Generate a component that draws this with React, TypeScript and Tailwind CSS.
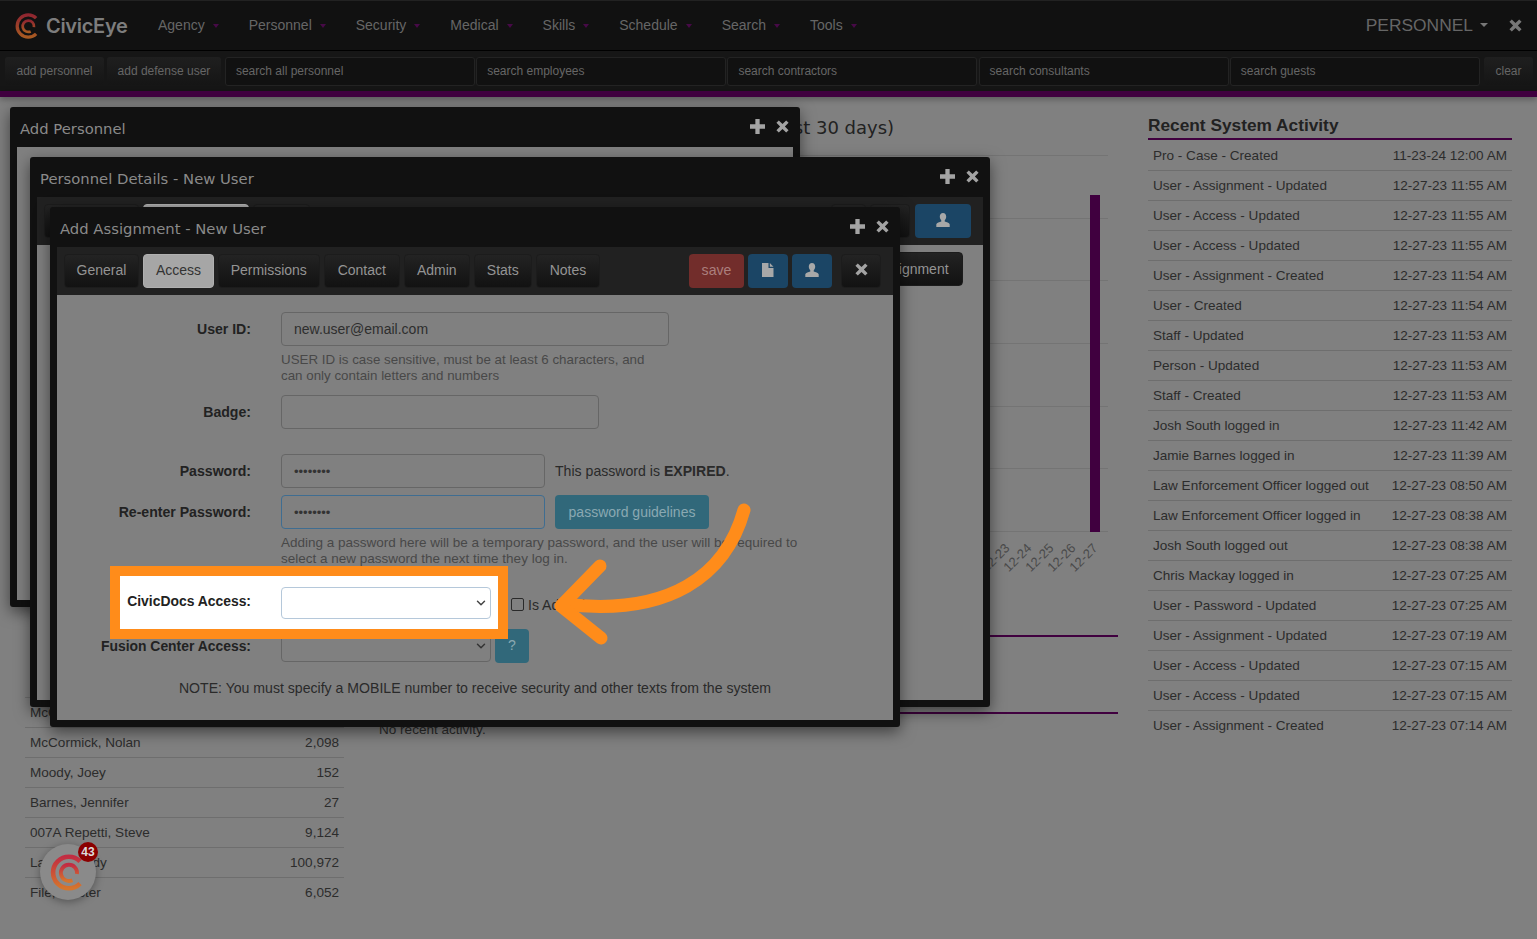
import React from "react";
import { ChevronDown } from "lucide-react";

const activity: [string, string][] = [
  ["Pro - Case - Created", "11-23-24 12:00 AM"],
  ["User - Assignment - Updated", "12-27-23 11:55 AM"],
  ["User - Access - Updated", "12-27-23 11:55 AM"],
  ["User - Access - Updated", "12-27-23 11:55 AM"],
  ["User - Assignment - Created", "12-27-23 11:54 AM"],
  ["User - Created", "12-27-23 11:54 AM"],
  ["Staff - Updated", "12-27-23 11:53 AM"],
  ["Person - Updated", "12-27-23 11:53 AM"],
  ["Staff - Created", "12-27-23 11:53 AM"],
  ["Josh South logged in", "12-27-23 11:42 AM"],
  ["Jamie Barnes logged in", "12-27-23 11:39 AM"],
  ["Law Enforcement Officer logged out", "12-27-23 08:50 AM"],
  ["Law Enforcement Officer logged in", "12-27-23 08:38 AM"],
  ["Josh South logged out", "12-27-23 08:38 AM"],
  ["Chris Mackay logged in", "12-27-23 07:25 AM"],
  ["User - Password - Updated", "12-27-23 07:25 AM"],
  ["User - Assignment - Updated", "12-27-23 07:19 AM"],
  ["User - Access - Updated", "12-27-23 07:15 AM"],
  ["User - Access - Updated", "12-27-23 07:15 AM"],
  ["User - Assignment - Created", "12-27-23 07:14 AM"],
];

const people: [string, string][] = [
  ["McCoy, Ann", "1,204"],
  ["McCormick, Nolan", "2,098"],
  ["Moody, Joey", "152"],
  ["Barnes, Jennifer", "27"],
  ["007A Repetti, Steve", "9,124"],
  ["Lane, Randy", "100,972"],
  ["File, Master", "6,052"],
];

const nav = ["Agency", "Personnel", "Security", "Medical", "Skills", "Schedule", "Search", "Tools"];
const searches = ["search all personnel", "search employees", "search contractors", "search consultants", "search guests"];
const tabs: [string, string][] = [
  ["General", "w-[75px]"],
  ["Access", "w-[71px]"],
  ["Permissions", "w-[101.5px]"],
  ["Contact", "w-[76.5px]"],
  ["Admin", "w-[65.5px]"],
  ["Stats", "w-[58.5px]"],
  ["Notes", "w-[64px]"],
];

function Logo({ id, size, from, to }: { id: string; size: number; from: string; to: string }) {
  return (
    <svg width={size} height={size} viewBox="0 0 48 48" fill="none">
      <defs>
        <linearGradient id={id} x1="0" y1="0" x2="0" y2="1">
          <stop offset="0" stopColor={from} />
          <stop offset="1" stopColor={to} />
        </linearGradient>
      </defs>
      <g stroke={`url(#${id})`} fill="none">
        <path strokeWidth="6" d="M39 9.5A20.5 20.5 0 1 0 39 38.5" />
        <path strokeWidth="5" d="M35 26A10.5 10.5 0 1 0 29 34" />
        <path strokeWidth="5" d="M25 24.5H37" />
      </g>
    </svg>
  );
}

function PlusIcon() {
  return (
    <svg width="15" height="15" viewBox="0 0 14 14" fill="currentColor">
      <path d="M5 0H9V5H14V9H9V14H5V9H0V5H5Z" />
    </svg>
  );
}
function XIcon({ size = 13 }: { size?: number }) {
  return (
    <svg width={size} height={size} viewBox="0 0 12 12" fill="currentColor">
      <path d="M2.6 .4 6 3.8 9.4 .4 11.6 2.6 8.2 6 11.6 9.4 9.4 11.6 6 8.2 2.6 11.6 .4 9.4 3.8 6 .4 2.6Z" />
    </svg>
  );
}
function UserIcon() {
  return (
    <svg width="14" height="14" viewBox="0 0 14 14" fill="currentColor">
      <path d="M7 0C9 0 10.2 1.5 10.2 3.6 10.2 5.2 9.5 6.6 8.7 7.4V8.6C10.5 9.3 13.2 10 13.7 11.2V14H.3V11.2C.8 10 3.5 9.3 5.3 8.6V7.4C4.5 6.6 3.8 5.2 3.8 3.6 3.8 1.5 5 0 7 0Z" />
    </svg>
  );
}
function FileIcon() {
  return (
    <svg width="12" height="14" viewBox="0 0 12 14" fill="currentColor">
      <path d="M0 0H6.5V5H11.5V14H0Z" />
      <path d="M7.8 0 11.5 3.7H7.8Z" />
    </svg>
  );
}

function ModalHeader({ title }: { title: string }) {
  return (
    <div className="h-10 flex items-center justify-between -mx-[7px] pl-[10px] pr-[11px] font-['DejaVu_Sans',sans-serif] text-[14.8px] text-[#8a8a8a]">
      <span className="pt-[4px]">{title}</span>
      <span className="flex items-center gap-[11px] text-[#a3a3a3] pb-[1px]">
        <PlusIcon />
        <XIcon />
      </span>
    </div>
  );
}

function DarkBtn({ label, w, active }: { label: React.ReactNode; w: string; active?: boolean }) {
  return (
    <div
      className={`${w} h-[34px] rounded-[4px] flex items-center justify-center text-[14px] pb-[1px] shrink-0 ${
        active
          ? "bg-[#a6a6a6] text-[#333] border border-[#b0b0b0]"
          : "bg-linear-to-b from-[#232323] to-[#121212] text-[#949494] border border-[#1c1c1c]"
      }`}
    >
      {label}
    </div>
  );
}

function Label({ children, className = "text-[14.1px] pt-[2px]" }: { children: React.ReactNode; className?: string }) {
  return <div className={`w-[194px] shrink-0 text-right font-bold text-[#222] mr-[30px] ${className}`}>{children}</div>;
}

function Password({ focus }: { focus?: boolean }) {
  return (
    <input
      type="password"
      readOnly
      defaultValue="12345678"
      className={`w-[264px] h-[34px] px-[12px] rounded-[4px] bg-transparent text-[13px] text-[#333] outline-none border ${
        focus ? "border-[#3f6d91]" : "border-[#666]"
      }`}
    />
  );
}

function SelectBox({ className, chevron }: { className: string; chevron: string }) {
  return (
    <div className="relative w-[210px] h-[32px]">
      <select className={`appearance-none w-full h-full rounded-[4px] border outline-none text-[14px] ${className}`}>
        <option></option>
      </select>
      <ChevronDown size={14} strokeWidth={2.5} className={`absolute right-[3px] top-[9px] pointer-events-none ${chevron}`} />
    </div>
  );
}

export default function App() {
  return (
    <div className="relative h-[939px] w-full overflow-hidden bg-[#808080] font-['Liberation_Sans',Arial,sans-serif]">
      {/* Top navigation */}
      <header className="h-[51px] bg-[#111] border-t border-t-[#222] border-b border-b-black flex items-center pl-[15px] pr-[15px]">
        <Logo id="hdr" size={26} from="#8f2630" to="#a85a22" />
        <span className="ml-[5px] mr-[15px] font-['Inter',sans-serif] font-semibold text-[20px] tracking-[-0.3px] text-[#7d7d7d] w-[82px]">CivicEye</span>
        <nav className="flex items-center text-[14px] text-[#666]">
          {nav.map((n) => (
            <div key={n} className="flex items-center px-[15px]">
              <span>{n}</span>
              <span className="ml-[8px] w-[6px] flex">
                <span className="inline-block w-0 h-0 border-x-[3px] border-x-transparent border-t-[4px] border-t-[#470a47]" />
              </span>
            </div>
          ))}
        </nav>
        <div className="ml-auto flex items-center text-[17.4px] text-[#666]">
          <span>PERSONNEL</span>
          <span className="ml-[7px] flex">
            <span className="inline-block w-0 h-0 border-x-[4px] border-x-transparent border-t-[4px] border-t-[#777]" />
          </span>
          <span className="ml-[21px] text-[#777]">
            <XIcon size={13} />
          </span>
        </div>
      </header>

      {/* Search toolbar */}
      <div className="h-[40px] bg-[#161616] flex items-start pt-[6px] pl-[5px] pr-[4px] text-[12px] text-[#666]">
        <div className="w-[99px] h-[28px] mr-[3px] rounded-[3px] bg-linear-to-b from-[#1f1f1f] to-[#151515] flex items-center justify-center">add personnel</div>
        <div className="w-[114px] h-[28px] mr-[4px] rounded-[3px] bg-linear-to-b from-[#1f1f1f] to-[#151515] flex items-center justify-center">add defense user</div>
        {searches.map((s) => (
          <div key={s} className="w-[250px] h-[29px] mr-[1.3px] rounded-[3px] bg-[#111] border border-[#232323] flex items-center pl-[10px] pb-[2px]">
            {s}
          </div>
        ))}
        <div className="ml-[3px] w-[49px] h-[28px] rounded-[3px] bg-linear-to-b from-[#1f1f1f] to-[#151515] flex items-center justify-center">clear</div>
      </div>
      <div className="h-[6px] bg-[#40003f] shadow-[0_2px_6px_rgba(0,0,0,0.35)]" />

      {/* Dashboard */}
      <main className="flex items-start text-[13.55px] text-[#2c2c2c]">
        <section className="ml-[25px] w-[319px] mt-[600px] shrink-0">
          {people.map(([n, v]) => (
            <div key={n} className="h-[30px] px-[5px] pt-[2px] flex items-center justify-between border-t border-[#6e6e6e]">
              <span>{n}</span>
              <span>{v}</span>
            </div>
          ))}
        </section>

        <section className="ml-[35px] w-[739px] shrink-0">
          <h2 className="pt-[21px] h-[58px] font-['DejaVu_Sans',sans-serif] text-[18px] leading-[20px] text-[#222] font-normal whitespace-nowrap pl-[225px]">
            Personnel Activity (last 30 days)
          </h2>
          <div className="relative h-[377px] mr-[10px] flex flex-col justify-between">
            {[0, 1, 2, 3, 4, 5, 6].map((i) => (
              <div key={i} className="border-t border-[#747474]" />
            ))}
            <div className="absolute right-[8px] bottom-0 w-[10px] h-[337px] bg-[#40003f]" />
            {["12-23", "12-24", "12-25", "12-26", "12-27"].map((d, i) => (
              <span
                key={d}
                style={{ left: 600 + i * 22 }}
                className="absolute top-[393px] text-[13px] text-[#4a4a4a] -rotate-45 origin-center whitespace-nowrap"
              >
                {d}
              </span>
            ))}
          </div>
          <div className="h-[105px] border-b-2 border-[#40003f]" />
          <div className="h-[77px] border-b-2 border-[#40003f]" />
          <p className="mt-[6px]">No recent activity.</p>
        </section>

        <section className="ml-[30px] w-[364px] shrink-0 pt-[19px]">
          <h2 className="font-bold text-[17.3px] leading-[19px] text-[#222] pb-[3px] border-b-2 border-[#40003f]">Recent System Activity</h2>
          <div className="pt-[1px]">
            {activity.map(([a, t], i) => (
              <div key={i} className="h-[30px] pt-[1px] flex items-center justify-between px-[5px] border-b border-[#6e6e6e] last:border-b-0">
                <span>{a}</span>
                <span>{t}</span>
              </div>
            ))}
          </div>
        </section>
      </main>

      {/* Stacked modals */}
      <div className="absolute left-[10px] top-[107px] w-[790px] h-[500px] bg-[#111] rounded-[3px] px-[7px] pb-[7px] shadow-[0_5px_15px_rgba(0,0,0,0.5)] flex flex-col">
        <ModalHeader title="Add Personnel" />
        <div className="flex-1 bg-[#808080]" />
      </div>

      <div className="absolute left-[30px] top-[157px] w-[960px] h-[550px] bg-[#111] rounded-[3px] px-[7px] pb-[7px] shadow-[0_5px_15px_rgba(0,0,0,0.5)] flex flex-col">
        <ModalHeader title="Personnel Details - New User" />
        <div className="flex-1 bg-[#808080] flex flex-col">
          <div className="h-[48px] bg-[#212121] flex items-center px-[7px] gap-[4px]">
            <DarkBtn label="General" w="w-[95px]" />
            <DarkBtn label="Access" w="w-[106px]" active />
            <DarkBtn label="" w="w-[57px]" />
            <div className="flex-1" />
            <DarkBtn label="" w="w-[35px]" />
            <DarkBtn label="" w="w-[40px]" />
            <div className="w-[56px] h-[34px] ml-[1px] mr-[5px] rounded-[4px] bg-[#1b4565] text-[#a8a8a8] flex items-center justify-center shrink-0 pb-[2px]">
              <UserIcon />
            </div>
          </div>
          <div className="flex justify-end pt-[7px] pr-[20px]">
            <DarkBtn label={<span className="pt-[2px]">Add Assignment</span>} w="w-[130px]" />
          </div>
        </div>
      </div>

      <div className="absolute left-[50px] top-[207px] w-[850px] h-[520px] bg-[#111] rounded-[3px] px-[7px] pb-[7px] shadow-[0_5px_15px_rgba(0,0,0,0.5)] flex flex-col">
        <ModalHeader title="Add Assignment - New User" />
        <div className="flex-1 bg-[#808080] flex flex-col text-[14.1px] text-[#2a2a2a]">
          <div className="h-[48px] bg-[#212121] flex items-center pl-[7px] pr-[12px] gap-[4px]">
            {tabs.map(([t, w]) => (
              <DarkBtn key={t} label={t} w={w} active={t === "Access"} />
            ))}
            <div className="flex-1" />
            <div className="w-[55px] h-[34px] rounded-[4px] bg-[#722d2b] text-[#ab7f7d] flex items-center justify-center">save</div>
            <div className="w-[40px] h-[34px] rounded-[4px] bg-[#1b4565] text-[#a8a8a8] flex items-center justify-center pb-[3px]">
              <FileIcon />
            </div>
            <div className="w-[40px] h-[34px] rounded-[4px] bg-[#1b4565] text-[#a8a8a8] flex items-center justify-center pb-[2px]">
              <UserIcon />
            </div>
            <div className="ml-[5px]">
              <DarkBtn label={<span className="text-[#a3a3a3] flex pb-[2px]"><XIcon /></span>} w="w-[40px]" />
            </div>
          </div>

          <div className="pt-[17px]">
            <div className="flex items-center">
              <Label>User ID:</Label>
              <div className="w-[388px] h-[34px] px-[12px] rounded-[4px] border border-[#666] flex items-center text-[14px] text-[#2e2e2e]">new.user@email.com</div>
            </div>
            <p className="ml-[224px] mt-[6px] text-[13.35px] leading-[16px] text-[#484848] w-[375px]">
              USER ID is case sensitive, must be at least 6 characters, and can only contain letters and numbers
            </p>
            <div className="flex items-center mt-[11px]">
              <Label>Badge:</Label>
              <div className="w-[318px] h-[34px] rounded-[4px] border border-[#666]" />
            </div>
            <div className="flex items-center mt-[25px]">
              <Label>Password:</Label>
              <Password />
              <span className="ml-[10px] pt-[2px]">
                This password is <b>EXPIRED</b>.
              </span>
            </div>
            <div className="flex items-center mt-[7px]">
              <Label>Re-enter Password:</Label>
              <Password focus />
              <div className="ml-[10px] w-[154px] h-[34px] rounded-[4px] bg-[#31687a] text-[14px] text-[#8aa8b2] flex items-center justify-center">password guidelines</div>
            </div>
            <p className="ml-[224px] mt-[6px] text-[13.5px] leading-[16px] text-[#484848] w-[530px]">
              Adding a password here will be a temporary password, and the user will be required to select a new password the next time they log in.
            </p>

            <div className="relative z-10 flex items-center mt-[20px] h-[32px]">
              <div className="absolute left-[53px] -top-[21px] w-[398px] h-[73px] bg-white border-[10px] border-[#ff8c1a]" />
              <Label className="relative -top-[2px] text-[13.9px]">CivicDocs Access:</Label>
              <div className="relative">
                <SelectBox className="bg-white border-[#b5c8da]" chevron="text-[#444]" />
              </div>
              <span className="absolute left-[454px] top-[11px] w-[13px] h-[13px] rounded-[2px] border border-[#2a2a2a]" />
              <span className="absolute left-[471px] top-[10px] leading-[16px]">Is Administrator</span>
            </div>

            <div className="flex items-center mt-[10px] h-[34px]">
              <Label className="text-[13.9px]">Fusion Center Access:</Label>
              <SelectBox className="bg-transparent border-[#666]" chevron="text-[#333]" />
              <div className="ml-[4px] w-[34px] h-[34px] rounded-[4px] bg-[#31687a] text-[#8aa8b2] flex items-center justify-center">?</div>
            </div>
            <p className="mt-[15px] text-center text-[#2a2a2a]">NOTE: You must specify a MOBILE number to receive security and other texts from the system</p>
          </div>
        </div>
      </div>

      {/* Annotation arrow */}
      <svg className="absolute z-20 left-[540px] top-[490px]" width="230" height="170" viewBox="540 490 230 170" fill="none" stroke="#ff8c1a" strokeWidth="13" strokeLinecap="round" strokeLinejoin="round">
        <path d="M744 510C726 575 670 617 563 604" />
        <path d="M600 566 561 606 601 638" />
      </svg>

      {/* Floating launcher */}
      <div className="absolute z-20 left-[40px] top-[844px] w-[56px] h-[56px] rounded-full bg-[#8a8a8a] shadow-[0_2px_8px_rgba(0,0,0,0.35)] flex items-center justify-center">
        <Logo id="fab" size={37} from="#c22c42" to="#d5752d" />
        <span className="absolute left-[38px] -top-[2px] w-[20px] h-[20px] rounded-full bg-[#8b0000] text-[#ddd] text-[12px] font-bold flex items-center justify-center">43</span>
      </div>
    </div>
  );
}
